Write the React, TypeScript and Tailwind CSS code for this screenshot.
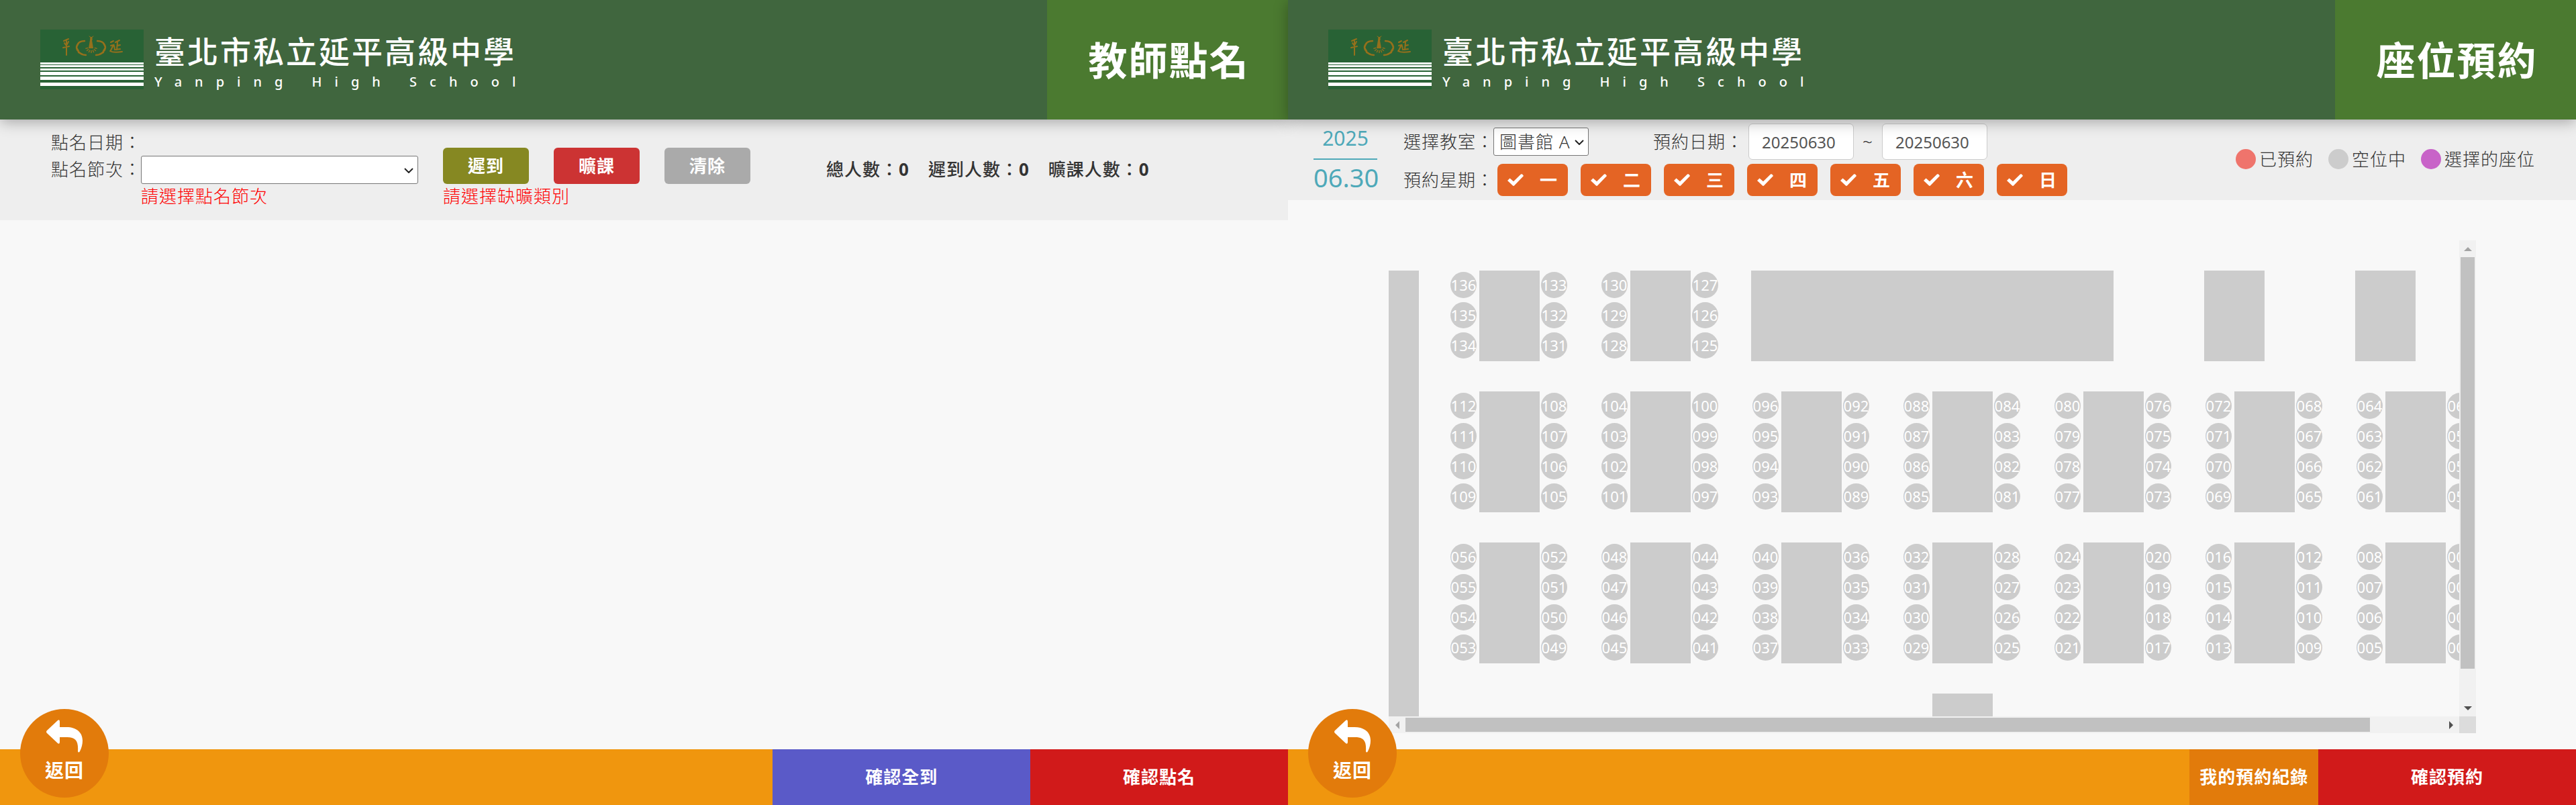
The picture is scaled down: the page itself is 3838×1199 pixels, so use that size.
import React from "react";

const SEAT_GROUPS = [
  { column: 3, row: 2, rows: 3, left: 136 },
  { column: 8, row: 2, rows: 3, left: 130 },
  ...[112, 104, 96, 88, 80, 72, 64].map((left, i) => ({ column: 3 + i * 5, row: 6, rows: 4, left })),
  ...[56, 48, 40, 32, 24, 16, 8].map((left, i) => ({ column: 3 + i * 5, row: 11, rows: 4, left })),
];

const BLOCKS = [
  { column: 1, row: 2, columns: 1, rows: 16 },
  { column: 13, row: 2, columns: 12, rows: 3 },
  { column: 28, row: 2, columns: 2, rows: 3 },
  { column: 33, row: 2, columns: 2, rows: 3 },
  { column: 19, row: 16, columns: 2, rows: 2 },
  ...SEAT_GROUPS.map((g) => ({ column: g.column + 1, row: g.row, columns: 2, rows: g.rows })),
];

const SEATS = SEAT_GROUPS.flatMap((g) =>
  Array.from({ length: g.rows }, (_, i) => [
    { id: g.left - i, column: g.column, row: g.row + i },
    { id: g.left - g.rows - i, column: g.column + 3, row: g.row + i },
  ]).flat(),
);

const DAYS = ["一", "二", "三", "四", "五", "六", "日"];

function Emblem() {
  const ticks = [-75, -50, -25, 0, 25, 50, 75];
  return (
    <svg viewBox="0 0 154 89" className="h-[89px] w-[154px] shrink-0" aria-hidden="true">
      <rect width="154" height="89" fill="#286235" />
      <g fill="#fff">
        <rect y="49" width="154" height="3" />
        <rect y="53" width="154" height="3" />
        <rect y="58" width="154" height="3" />
        <rect y="63" width="154" height="5" />
        <rect y="70" width="154" height="5" />
        <rect y="79" width="154" height="5" />
      </g>
      <g fill="none" stroke="#95701c" strokeLinecap="round">
        <path d="M35 17l7-3M36 20l2 3M42 18l-2 4M34 27l9-2M39 15l0 23" strokeWidth="2" />
        <path d="M66 17C55 17 51 27 57 33Q61 38 68 38" strokeWidth="2.4" />
        <path d="M85 17C96 17 100 27 94 33Q90 38 83 38" strokeWidth="2.4" />
        <path d="M57 20l-3 6M54 27l3 5M57 34l6 3M94 20l3 6M97 27l-3 5M94 34l-6 3" strokeWidth="2.4" />
        <path d="M73 10l3 2 3-2" strokeWidth="1" />
        <path d="M105 19l4-2M105 24l4-1-4 8M104 32q5 3 18 1M118 16l-6 3M115 19l-1 11M110 24l1 6 8-1M115 24l4-1" strokeWidth="2" />
      </g>
      <path d="M74.500 11h3v5h-.5l2 12h-7l2-12z" fill="#95701c" />
      {ticks.map((a) => (
        <path key={a} d="M76 31v4" stroke="#95701c" strokeWidth="1.4" transform={`rotate(${a} 76 26)`} />
      ))}
    </svg>
  );
}

function Header({ title }: { title: string }) {
  return (
    <header className="relative z-10 flex h-[178px] shrink-0 bg-[#40663e] text-white shadow-[0_4px_20px_rgba(0,0,0,0.3)]">
      <div className="flex flex-1 items-start pl-[60px] pt-[44px]">
        <Emblem />
        <div className="pl-4 pt-1">
          <div className="text-[46px] font-medium leading-[56px] tracking-[3px]">臺北市私立延平高級中學</div>
          <div className="pt-1 text-[20px] font-medium leading-7 tracking-[19px]">Yanping High School</div>
        </div>
      </div>
      <h1 className="flex w-[359px] items-center justify-center bg-[#4b7a30] pl-1 text-[58px] font-bold tracking-[2px]">
        {title}
      </h1>
    </header>
  );
}

function BackButton() {
  return (
    <button
      type="button"
      className="absolute bottom-[11px] left-[30px] z-10 flex h-[132px] w-[132px] flex-col items-center rounded-full bg-[#e27b0b] pt-4 text-white"
    >
      <svg viewBox="0 0 54 49" className="h-[49px] w-[54px]" fill="currentColor" aria-hidden="true">
        <path d="M1 16 17 1q3-2 3 2v8h10c15 0 24 8 24 20q0 8-4 16-2 3-3 0C48 32 44 26 31 26H20v7q0 4-3 2L1 20q-2-2 0-4z" />
      </svg>
      <span className="pt-2 text-[28px] font-bold leading-9 tracking-[1px]">返回</span>
    </button>
  );
}

function Chevron() {
  return (
    <svg
      viewBox="0 0 14 8"
      className="pointer-events-none absolute right-[7px] top-[18px] h-2 w-[14px]"
      fill="none"
      stroke="#222"
      strokeWidth="2"
      aria-hidden="true"
    >
      <path d="M1 1l6 6 6-6" />
    </svg>
  );
}

const selectBox = "h-[42px] w-full appearance-none rounded-[3px] border border-[#767676] bg-white pl-2";
const footerButton = "flex items-center justify-center text-[26px] font-bold tracking-[1px] text-white";

function AttendancePage() {
  return (
    <section className="relative flex w-1/2 flex-col">
      <Header title="教師點名" />
      <div className="flex h-[150px] shrink-0 bg-[#eeeeee] pl-[76px]">
        <div className="w-[584px] pt-[14px]">
          <div className="leading-10">點名日期：</div>
          <div className="flex">
            <label htmlFor="period" className="w-[134px] shrink-0 whitespace-nowrap leading-10">點名節次：</label>
            <div className="w-[413px]">
              <div className="relative">
                <select id="period" className={selectBox} />
                <Chevron />
              </div>
              <p className="leading-9 text-[#ff0000]">請選擇點名節次</p>
            </div>
          </div>
        </div>
        <div className="w-[571px] pt-[42px]">
          <div className="flex gap-[37px] font-bold text-white">
            <button type="button" className="h-[54px] w-32 rounded-md bg-[#868822] tracking-[1px]">遲到</button>
            <button type="button" className="h-[54px] w-32 rounded-md bg-[#cc3333] tracking-[1px]">曠課</button>
            <button type="button" className="h-[54px] w-32 rounded-md bg-[#aaaaaa] tracking-[1px]">清除</button>
          </div>
          <p className="leading-9 text-[#ff0000]">請選擇缺曠類別</p>
        </div>
        <div className="flex gap-7 pt-[54px] font-medium leading-10">
          <span>總人數：<b>0</b></span>
          <span>遲到人數：<b>0</b></span>
          <span>曠課人數：<b>0</b></span>
        </div>
      </div>
      <main className="flex-1" />
      <footer className="flex h-[83px] shrink-0 justify-end bg-[#f0960e]">
        <button type="button" className={`${footerButton} w-1/5 bg-[#5a5ac8]`}>確認全到</button>
        <button type="button" className={`${footerButton} w-1/5 bg-[#d11a1a]`}>確認點名</button>
      </footer>
      <BackButton />
    </section>
  );
}

function LegendItem({ color, label }: { color: string; label: string }) {
  return (
    <span className="flex items-center gap-[5px]">
      <span className={`h-[30px] w-[30px] rounded-full ${color}`} />
      {label}
    </span>
  );
}

function Arrow({ className }: { className: string }) {
  return (
    <svg viewBox="0 0 12 6" className={`h-[6px] w-3 ${className}`} fill="currentColor" aria-hidden="true">
      <path d="M6 0l6 6H0z" />
    </svg>
  );
}

function SeatMap() {
  return (
    <div className="mb-6 ml-[150px] mr-[149px] mt-[60px] grid min-h-0 flex-1 grid-cols-[1fr_25px] grid-rows-[1fr_25px]">
      <div className="min-h-0 min-w-0 overflow-hidden">
        <div className="grid h-0 w-0 auto-cols-[45px] auto-rows-[45px]">
          {BLOCKS.map((b) => (
            <div
              key={`${b.column}-${b.row}`}
              className="bg-[#cccccc]"
              style={{ gridColumn: `${b.column} / span ${b.columns}`, gridRow: `${b.row} / span ${b.rows}` }}
            />
          ))}
          {SEATS.map((s) => (
            <button
              key={s.id}
              type="button"
              className="mb-1 ml-[2px] mr-1 mt-[2px] flex items-center justify-center rounded-full bg-[#cccccc] text-[22px] font-normal tracking-normal text-white"
              style={{ gridColumn: s.column, gridRow: s.row }}
            >
              {String(s.id).padStart(3, "0")}
            </button>
          ))}
        </div>
      </div>
      <div className="flex flex-col items-center bg-[#f1f1f1]">
        <div className="flex h-[25px] items-center text-[#a3a3a3]"><Arrow className="" /></div>
        <div className="flex-1 self-stretch px-[2px]"><div className="h-[93%] bg-[#c1c1c1]" /></div>
        <div className="flex h-[25px] items-center text-[#505050]"><Arrow className="rotate-180" /></div>
      </div>
      <div className="flex items-center bg-[#f1f1f1]">
        <div className="flex w-[25px] justify-center text-[#a3a3a3]"><Arrow className="-rotate-90" /></div>
        <div className="flex-1 self-stretch py-[2px]"><div className="h-full w-[93%] bg-[#c1c1c1]" /></div>
        <div className="flex w-[25px] justify-center text-[#505050]"><Arrow className="rotate-90" /></div>
      </div>
      <div className="bg-[#dcdcdc]" />
    </div>
  );
}

const dateInput =
  "h-[54px] w-[157px] rounded-md border border-[#cccccc] bg-white pl-[19px] text-[24px] font-normal tracking-normal text-[#555555]";

function ReservationPage() {
  return (
    <section className="relative flex w-1/2 flex-col">
      <Header title="座位預約" />
      <div className="flex h-[120px] shrink-0 bg-[#eeeeee] pl-[38px] pr-[61px]">
        <div className="w-[95px] text-center font-normal tracking-normal text-[#4ea9b9]">
          <div className="h-[60px] border-b-2 border-[#4ea9b9] pt-2 text-[30px] leading-10">2025</div>
          <div className="text-[38px] leading-[52px]">06.30</div>
        </div>
        <div className="pl-[39px]">
          <div className="mt-[6px] flex h-[54px] items-center whitespace-nowrap">
            <label htmlFor="room" className="w-[134px]">選擇教室：</label>
            <div className="relative w-[142px]">
              <select id="room" className={selectBox}>
                <option>圖書館 A</option>
              </select>
              <Chevron />
            </div>
            <label htmlFor="from" className="w-[238px] pl-[96px]">預約日期：</label>
            <input id="from" defaultValue="20250630" className={dateInput} />
            <span className="w-[42px] text-center">~</span>
            <input aria-label="預約結束日期" defaultValue="20250630" className={dateInput} />
          </div>
          <div className="flex items-center pt-[6px]">
            <span className="w-[140px]">預約星期：</span>
            <div className="flex gap-[19px]">
              {DAYS.map((d) => (
                <label
                  key={d}
                  className="flex h-12 w-[105px] items-center gap-6 rounded-lg bg-[#e46424] pl-[15px] font-bold text-white"
                >
                  <input type="checkbox" defaultChecked className="sr-only" />
                  <svg viewBox="0 0 24 18" className="h-[18px] w-6" fill="currentColor" aria-hidden="true">
                    <path d="M3.500 6.500 9 11.200 20 .5Q21.500-.3 22.800 1.200L24 3 10 17.500Q9 18.400 8 17.500L0 10z" />
                  </svg>
                  <span>{d}</span>
                </label>
              ))}
            </div>
          </div>
        </div>
        <div className="ml-auto flex gap-[22px] self-start pt-[42px] leading-[34px]">
          <LegendItem color="bg-[#ef746c]" label="已預約" />
          <LegendItem color="bg-[#cccccc]" label="空位中" />
          <LegendItem color="bg-[#c863c8]" label="選擇的座位" />
        </div>
      </div>
      <SeatMap />
      <footer className="flex h-[83px] shrink-0 justify-end bg-[#f0960e]">
        <button type="button" className={`${footerButton} w-1/10 bg-[#e27b0b]`}>我的預約紀錄</button>
        <button type="button" className={`${footerButton} w-1/5 bg-[#d11a1a]`}>確認預約</button>
      </footer>
      <BackButton />
    </section>
  );
}

export default function App() {
  return (
    <div
      lang="zh-Hant"
      className="flex h-screen bg-[#f8f8f8] font-['Noto_Sans','Noto_Sans_CJK_TC',sans-serif] text-[26px] font-light tracking-[1px] text-[#333333]"
    >
      <AttendancePage />
      <ReservationPage />
    </div>
  );
}
